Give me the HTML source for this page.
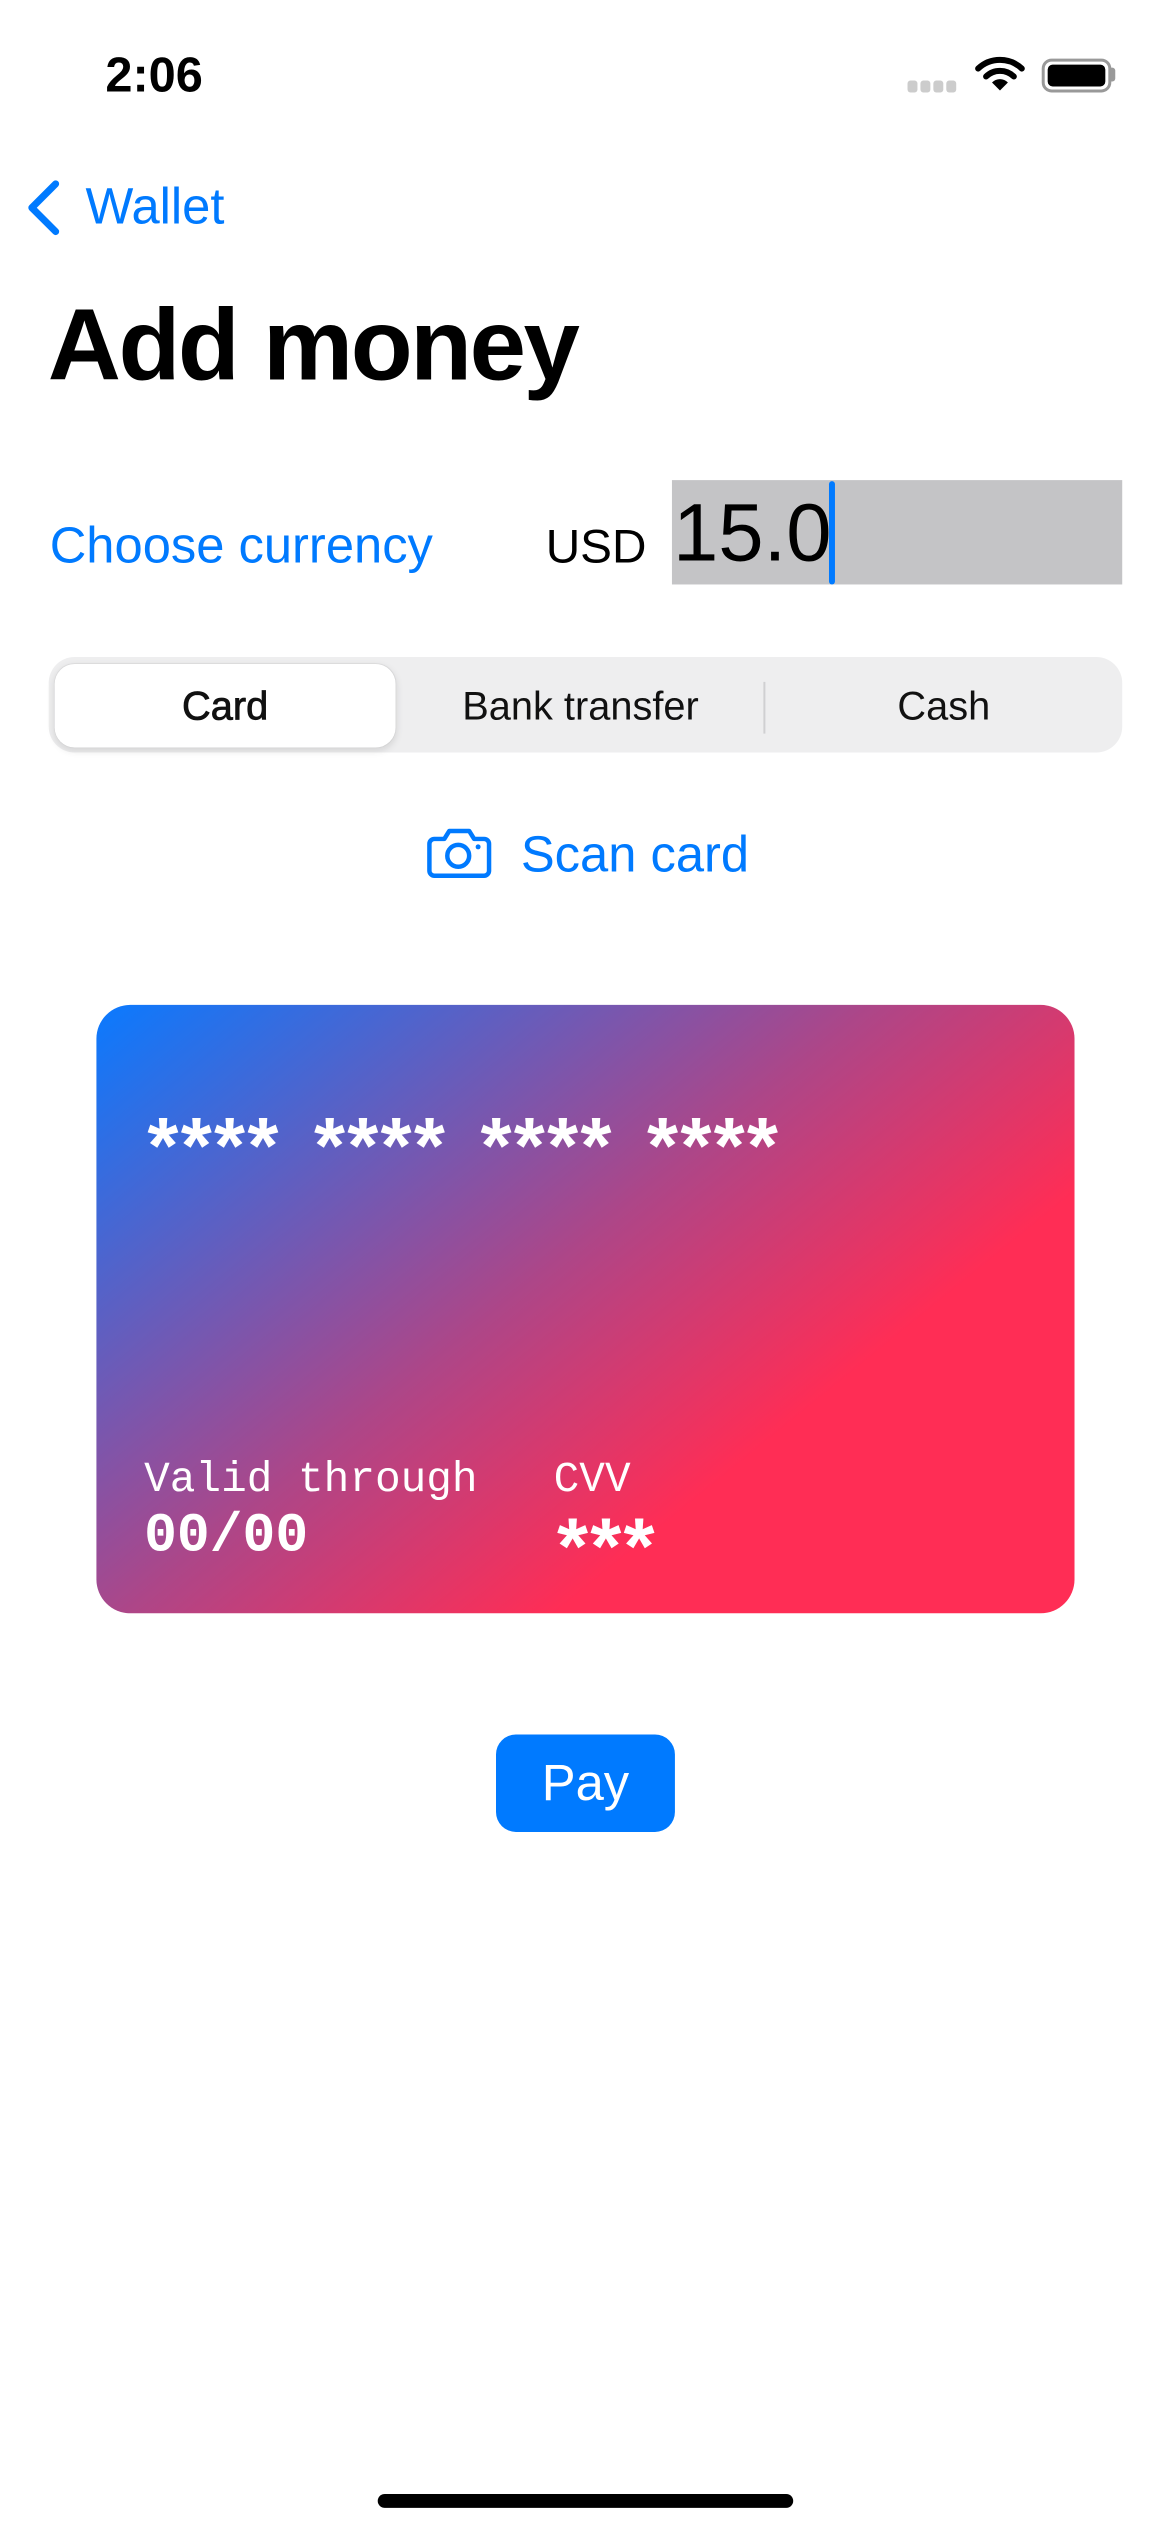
<!DOCTYPE html>
<html><head><meta charset="utf-8">
<style>
html,body{margin:0;padding:0;}
body{width:1170px;height:2532px;position:relative;background:#fff;font-family:"Liberation Sans",sans-serif;overflow:hidden;}
#w{position:absolute;left:0;top:0;width:1170px;height:2532px;transform:scale(0.994);transform-origin:0 0;}
.a{position:absolute;white-space:nowrap;}
.blue{color:#007aff;}
.mono{font-family:"Liberation Mono","DejaVu Sans Mono",monospace;color:#fff;}
.ast{font-family:"Liberation Mono",monospace;color:#fff;font-size:80px;line-height:80px;font-weight:bold;letter-spacing:-14.5px;}
</style></head><body><div id="w">
<div class="a" style="left:106px;top:48px;font-size:49px;font-weight:bold;line-height:56px;">2:06</div>
<div class="a" style="left:913px;top:80px;">
 <span style="display:inline-block;width:10px;height:12px;background:#ccc;border-radius:3px;margin-right:3px"></span><span style="display:inline-block;width:10px;height:12px;background:#ccc;border-radius:3px;margin-right:3px"></span><span style="display:inline-block;width:10px;height:12px;background:#ccc;border-radius:3px;margin-right:3px"></span><span style="display:inline-block;width:10px;height:12px;background:#ccc;border-radius:3px"></span>
</div>
<svg class="a" style="left:980px;top:55px" width="52" height="38" viewBox="0 0 52 38">
 <path d="M4 14 A32 32 0 0 1 48 14" stroke="#000" stroke-width="6" fill="none" stroke-linecap="round"/>
 <path d="M12 22 A20 20 0 0 1 40 22" stroke="#000" stroke-width="6" fill="none" stroke-linecap="round"/>
 <path d="M26 36 L18 28 A11 11 0 0 1 34 28 Z" fill="#000"/>
</svg>
<div class="a" style="left:1048px;top:59px;width:64px;height:28px;border:3px solid #999;border-radius:10px;"></div>
<div class="a" style="left:1054px;top:65px;width:58px;height:22px;background:#000;border-radius:5px;"></div>
<div class="a" style="left:1117px;top:68px;width:5px;height:14px;background:#999;border-radius:0 3px 3px 0;"></div>

<svg class="a" style="left:24px;top:180px" width="40" height="58" viewBox="0 0 40 58"><path d="M32 5 L8 29 L32 53" stroke="#007aff" stroke-width="7" fill="none" stroke-linecap="round" stroke-linejoin="round"/></svg>
<div class="a blue" style="left:86px;top:178px;font-size:51px;line-height:60px;">Wallet</div>

<div class="a" style="left:48px;top:287px;font-size:102px;font-weight:bold;line-height:120px;letter-spacing:-2.5px;">Add money</div>

<div class="a blue" style="left:50px;top:519px;font-size:51px;line-height:60px;">Choose currency</div>
<div class="a" style="left:549px;top:521px;font-size:48px;line-height:60px;">USD</div>
<div class="a" style="left:676px;top:483px;width:453px;height:105px;background:#c4c4c6;"></div>
<div class="a" style="left:677px;top:487px;font-size:82px;line-height:100px;color:#000;">15.0</div>
<div class="a" style="left:834px;top:484px;width:6px;height:104px;background:#007aff;border-radius:3px;"></div>

<div class="a" style="left:49px;top:661px;width:1080px;height:96px;background:#eeeeef;border-radius:26px;"></div>
<div class="a" style="left:55px;top:668px;width:343px;height:84px;background:#fff;border-radius:20px;box-shadow:0 3px 8px rgba(0,0,0,0.12),0 0 1px rgba(0,0,0,0.1);"></div>
<div class="a" style="left:768px;top:686px;width:2px;height:52px;background:#d0d0d2;"></div>
<div class="a" style="left:55px;width:343px;top:686px;text-align:center;font-size:40px;line-height:50px;color:#111;-webkit-text-stroke:0.8px #111;">Card</div>
<div class="a" style="left:400px;width:368px;top:686px;text-align:center;font-size:40px;line-height:50px;color:#111;">Bank transfer</div>
<div class="a" style="left:770px;width:359px;top:686px;text-align:center;font-size:40px;line-height:50px;color:#111;">Cash</div>

<svg class="a" style="left:429px;top:832px" width="66" height="52" viewBox="0 0 66 52">
 <path d="M8 12 H18 L23 4 H43 L48 12 H58 A5 5 0 0 1 63 17 V44 A5 5 0 0 1 58 49 H8 A5 5 0 0 1 3 44 V17 A5 5 0 0 1 8 12 Z" stroke="#007aff" stroke-width="4.5" fill="none" stroke-linejoin="round"/>
 <circle cx="32" cy="29" r="11" stroke="#007aff" stroke-width="4.5" fill="none"/>
 <circle cx="52" cy="20" r="2.5" fill="#007aff"/>
</svg>
<div class="a blue" style="left:524px;top:830px;font-size:51px;line-height:60px;">Scan card</div>

<div class="a" style="left:97px;top:1011px;width:984px;height:612px;border-radius:34px;background:linear-gradient(141deg,#0a7aff 0%,#ad4688 45%,#ff2d55 70%,#ff2d55 100%);"></div>
<div class="a ast" style="left:140px;top:1123px;">**** **** **** ****</div>
<div class="a mono" style="left:145px;top:1464px;font-size:43px;line-height:50px;">Valid through</div>
<div class="a mono" style="left:557px;top:1464px;font-size:43px;line-height:50px;">CVV</div>
<div class="a mono" style="left:145px;top:1514px;font-size:55px;font-weight:bold;line-height:64px;">00/00</div>
<div class="a ast" style="left:552px;top:1526px;">***</div>

<div class="a" style="left:499px;top:1745px;width:180px;height:98px;background:#007aff;border-radius:20px;color:#fff;font-size:51px;line-height:98px;text-align:center;">Pay</div>

<div class="a" style="left:380px;top:2509px;width:418px;height:14px;background:#000;border-radius:7px;"></div>
</div></body></html>
